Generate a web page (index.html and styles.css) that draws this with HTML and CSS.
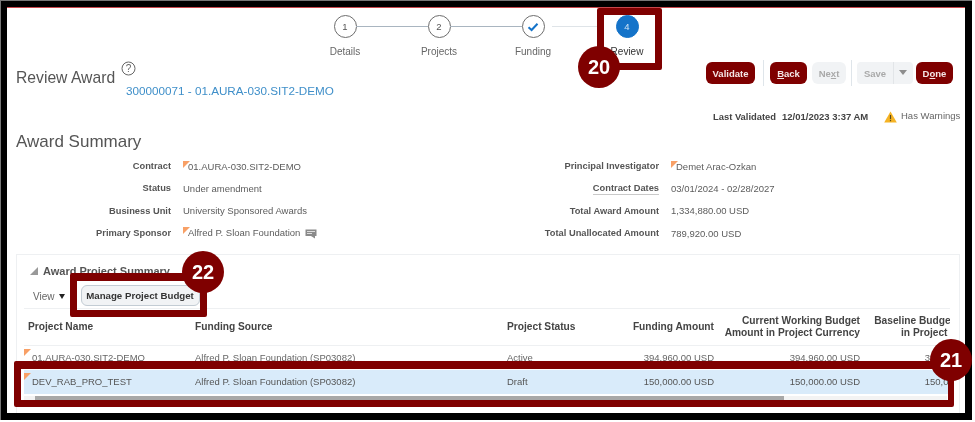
FILE: index.html
```html
<!DOCTYPE html>
<html lang="en">
<head>
<meta charset="utf-8">
<title>Review Award</title>
<link rel="stylesheet" href="styles.css">
</head>
<body>
<div class="frame">
  <div class="page">
    <div class="train">
      <div class="step"><span class="dot">1</span><span class="step-label">Details</span></div>
      <div class="step"><span class="dot">2</span><span class="step-label">Projects</span></div>
      <div class="step"><span class="dot"><svg width="12" height="10" viewBox="0 0 12 10"><path d="M1.5 5.2 4.6 8 10.5 1.8" fill="none" stroke="#1473c9" stroke-width="2"/></svg></span><span class="step-label">Funding</span></div>
      <div class="step current"><span class="dot">4</span><span class="step-label">Review</span></div>
    </div>

    <div class="head">
      <div class="title-block">
        <div class="title-line">
          <h1 class="title">Review Award</h1>
          <svg class="help" width="15" height="15" viewBox="0 0 15 15"><circle cx="7.5" cy="7.5" r="6.5" fill="none" stroke="#666" stroke-width="1"/><text x="7.5" y="11" text-anchor="middle" class="help-mark">?</text></svg>
        </div>
        <a class="award-link">300000071 - 01.AURA-030.SIT2-DEMO</a>
      </div>
      <div class="actions">
        <button class="btn primary validate">Validate</button>
        <span class="sep"></span>
        <button class="btn primary back"><u>B</u>ack</button>
        <button class="btn off next">Ne<u>x</u>t</button>
        <span class="sep"></span>
        <div class="split"><span class="split-main">Save</span><span class="split-arrow"></span></div>
        <button class="btn primary done">D<u>o</u>ne</button>
      </div>
    </div>

    <div class="validated">
      <span class="v-label">Last Validated</span>
      <span class="v-date">12/01/2023 3:37 AM</span>
      <svg class="warn" width="13" height="12" viewBox="0 0 13 12"><path d="M6.5.4 12.8 11.6H.2Z" fill="#f5b324"/><rect x="5.9" y="4" width="1.2" height="4.2" fill="#5b4a1c"/><rect x="5.9" y="9" width="1.2" height="1.2" fill="#5b4a1c"/></svg>
      <span class="v-warn">Has Warnings</span>
    </div>

    <h2 class="section">Award Summary</h2>

    <div class="form">
      <span class="lbl">Contract</span><span class="val flagged">01.AURA-030.SIT2-DEMO</span>
      <span class="lbl">Principal Investigator</span><span class="val flagged">Demet Arac-Ozkan</span>
      <span class="lbl">Status</span><span class="val">Under amendment</span>
      <span class="lbl"><span class="dotted">Contract Dates</span></span><span class="val">03/01/2024 - 02/28/2027</span>
      <span class="lbl">Business Unit</span><span class="val">University Sponsored Awards</span>
      <span class="lbl">Total Award Amount</span><span class="val">1,334,880.00 USD</span>
      <span class="lbl">Primary Sponsor</span><span class="val flagged sponsor">Alfred P. Sloan Foundation
        <svg width="12" height="10" viewBox="0 0 12 10"><rect x=".5" y=".5" width="11" height="6.5" fill="#8a8a8a"/><rect x="2" y="2" width="8" height="1" fill="#ddd"/><rect x="2" y="4" width="5" height="1" fill="#ddd"/><path d="M6 7h4v2.6Z" fill="#8a8a8a"/></svg></span>
      <span class="lbl">Total Unallocated Amount</span><span class="val">789,920.00 USD</span>
    </div>

    <section class="panel">
      <div class="panel-head"><span class="tri"></span><span class="panel-title">Award Project Summary</span></div>
      <div class="toolbar">
        <span class="view">View</span><span class="caret"></span>
        <button class="tool-btn">Manage Project Budget</button>
      </div>
      <div class="table-wrap">
        <table class="grid">
          <colgroup><col class="c1"><col class="c2"><col class="c3"><col class="c4"><col class="c5"><col class="c6"></colgroup>
          <thead>
            <tr>
              <th>Project Name</th><th>Funding Source</th><th>Project Status</th>
              <th class="num">Funding Amount</th>
              <th class="num">Current Working Budget<br>Amount in Project Currency</th>
              <th class="num">Baseline Budget Amount<br>in Project Currency</th>
            </tr>
          </thead>
          <tbody>
            <tr>
              <td class="flag-cell">01.AURA-030.SIT2-DEMO</td><td>Alfred P. Sloan Foundation (SP03082)</td><td>Active</td>
              <td class="num">394,960.00 USD</td><td class="num">394,960.00 USD</td><td class="num">394,960.00 USD</td>
            </tr>
            <tr class="selected">
              <td class="flag-cell">DEV_RAB_PRO_TEST</td><td>Alfred P. Sloan Foundation (SP03082)</td><td>Draft</td>
              <td class="num">150,000.00 USD</td><td class="num">150,000.00 USD</td><td class="num">150,000.00 USD</td>
            </tr>
          </tbody>
        </table>
      </div>
      <div class="scrollbar"><div class="thumb"></div></div>
    </section>
  </div>

  <div class="callout c20"></div>
  <div class="callout c22"></div>
  <div class="callout c21"></div>
  <div class="badge b20">20</div>
  <div class="badge b22">22</div>
  <div class="badge b21">21</div>
</div>
</body>
</html>
```
FILE: styles.css
```css
* { box-sizing: border-box; }
html, body { margin: 0; padding: 0; background: #fff; }
body {
  width: 975px;
  height: 422px;
  overflow: hidden;
  font-family: "Liberation Sans", Arial, sans-serif;
  font-size: 9.5px;
  color: #555;
}
.frame {
  position: relative;
  width: 972px;
  height: 420px;
  border: 1px solid #777;
  border-bottom: 0;
  border-right: 0;
  background: #000;
  padding: 6px 7px 7px 6px;
  filter: blur(0.45px);
}
.page {
  height: 100%;
  background: #fff;
  border-top: 1px solid #c8474c;
  overflow: hidden;
}

/* train */
.train { display: flex; padding: 7px 0 0 291px; height: 49px; }
.step {
  position: relative;
  width: 94px;
  display: flex;
  flex-direction: column;
  align-items: center;
}
.step:not(:last-child)::after {
  content: "";
  position: absolute;
  left: 58px;
  top: 11px;
  width: 72px;
  height: 1px;
  background: #a9b5c0;
}
.step:nth-child(3)::after { background: #dfe4e8; left: 66px; width: 50px; }
.dot {
  width: 23px;
  height: 23px;
  border: 1.5px solid #6d6d6d;
  border-radius: 50%;
  display: flex;
  align-items: center;
  justify-content: center;
  font-size: 9.5px;
  color: #555;
  background: #fff;
}
.step-label { margin-top: 8px; font-size: 10px; color: #666; }
.current .dot { background: #1473c9; border-color: #1473c9; color: #cfe3f5; }
.current .step-label { color: #333; }

/* page head */
.head { display: flex; justify-content: space-between; height: 48px; padding: 4px 12px 0 9px; }
.title-line { display: flex; align-items: flex-start; }
.title { margin: 8px 0 0; font-size: 15.7px; line-height: 18px; font-weight: 400; color: #555; }
.help { margin: 0 0 0 6px; }
.award-link { display: block; margin: -3px 0 0 110px; font-size: 11.7px; line-height: 14px; color: #3f8fc9; }
.help-mark { font-size: 10px; fill: #666; font-family: "Liberation Sans", sans-serif; }
.actions { display: flex; align-items: flex-start; padding-top: 1px; }
.btn {
  height: 22px;
  border: 0;
  border-radius: 6px;
  font: 700 9.5px "Liberation Sans", Arial, sans-serif;
  padding: 0;
}
.primary { background: #7f0000; color: #f4e6e6; }
.off { background: #f1f3f5; color: #a9a9a9; }
.validate { width: 49px; }
.back { width: 37px; }
.next { width: 34px; margin-left: 5px; }
.done { width: 37px; margin-left: 3px; }
.sep { width: 1px; height: 26px; margin: -2px 6px 0 8px; background: #dfe5ea; }
.next + .sep { margin: -2px 5px 0 5px; }
.split { display: flex; width: 56px; height: 22px; background: #f1f3f5; border-radius: 4px; color: #a9a9a9; font-weight: 700; }
.split-main { flex: 1; display: flex; align-items: center; justify-content: center; }
.split-arrow { width: 20px; border-left: 1px solid #e2e5e8; position: relative; }
.split-arrow::after {
  content: "";
  position: absolute;
  left: 5px;
  top: 8px;
  border: 4px solid transparent;
  border-top: 5px solid #8d8d8d;
  border-bottom: 0;
}

/* validated */
.validated { display: flex; align-items: center; height: 17px; margin-top: 3px; padding-left: 706px; color: #444; }
.v-label { font-weight: 700; width: 69px; font-size: 9.4px; }
.v-date { font-weight: 700; width: 102px; font-size: 9.5px; }
.warn { margin-right: 4px; }
.v-warn { color: #666; font-size: 9.5px; margin-top: -3px; }

.section { margin: 7px 0 0 9px; font-size: 17px; line-height: 20px; font-weight: 400; color: #555; height: 23px; }

/* form */
.form {
  display: grid;
  grid-template-columns: 155px 310px 154px 1fr;
  column-gap: 12px;
  grid-auto-rows: 22.3px;
  margin-left: 9px;
  align-items: center;
  height: 99px;
}
.lbl { text-align: right; font-weight: 700; color: #555; font-size: 9.3px; }
.val { color: #5c5c5c; }
.dotted { border-bottom: 1px solid #c9c9c9; padding-bottom: 1px; }
.flagged, .flag-cell { position: relative; padding-left: 5px; }
.flagged::before, .flag-cell::before {
  content: "";
  position: absolute;
  left: 0;
  top: 0;
  border-top: 7px solid #f8a066;
  border-right: 7px solid transparent;
}
.sponsor svg { vertical-align: -3px; margin-left: 2px; }

/* panel */
.panel {
  margin: 0 5px 0 9px;
  border: 1px solid #eef0f2;
  border-bottom: 0;
  height: 160px;
  padding-left: 7px;
}
.panel-head { display: flex; align-items: center; height: 29px; padding: 2px 0 0 6px; }
.tri { width: 0; height: 0; border-bottom: 8px solid #999; border-left: 8px solid transparent; margin-right: 5px; }
.panel-title { font-size: 11px; font-weight: 700; color: #555; }
.toolbar { display: flex; align-items: center; height: 25px; padding-left: 9px; width: 926px; border-bottom: 1px solid #eef0f2; }
.view { color: #666; font-size: 10px; }
.caret { margin: 1px 16px 0 4px; border: 3.5px solid transparent; border-top: 5px solid #222; border-bottom: 0; }
.tool-btn {
  width: 119px;
  height: 21px;
  margin-top: -2px;
  padding: 0;
  border: 1px solid #c3ccd4;
  border-radius: 6px;
  background: #f1f3f5;
  color: #333;
  font: 700 9.7px "Liberation Sans", Arial, sans-serif;
}
.table-wrap { width: 926px; overflow: hidden; }
.grid { width: 975px; table-layout: fixed; border-collapse: collapse; }
.c1 { width: 167px; } .c2 { width: 312px; } .c3 { width: 117px; }
.c4 { width: 98px; } .c5 { width: 146px; } .c6 { width: 135px; }
.grid th {
  height: 36px;
  padding: 1px 4px 0;
  text-align: left;
  vertical-align: middle;
  font-size: 10.2px;
  line-height: 12px;
  font-weight: 700;
  color: #444;
  border-bottom: 1px solid #eef0f2;
  white-space: nowrap;
}
.grid td {
  height: 25px;
  padding: 0 4px;
  font-size: 9.5px;
  color: #666;
  white-space: nowrap;
  vertical-align: middle;
}
.grid .num { text-align: right; }
.grid .flag-cell { padding-left: 8px; }
.flag-cell::before { top: 3px; }
.selected td { background: #d9ebfa; height: 24px; padding-bottom: 1px; color: #555; }
.scrollbar { width: 923px; height: 5px; margin-top: 2px; background: #f3f3f3; padding-left: 11px; }
.thumb { width: 749px; height: 5px; background: #a8a8a8; }

/* overlays */
.callout { position: absolute; border: 7px solid #7f0000; border-radius: 2px; }
.c20 { left: 596px; top: 7px; width: 65px; height: 62px; }
.c22 { left: 69px; top: 272px; width: 137px; height: 44px; border-top-width: 8px; }
.c21 { left: 13px; top: 360px; width: 940px; height: 46px; border-width: 8px 6px 7px 7px; }
.badge {
  position: absolute;
  width: 42px;
  height: 42px;
  border-radius: 50%;
  background: #7f0000;
  color: #fff;
  font-size: 20px;
  font-weight: 700;
  display: flex;
  align-items: center;
  justify-content: center;
}
.b20 { left: 577px; top: 45px; }
.b22 { left: 181px; top: 250px; }
.b21 { left: 929px; top: 338px; }
```
